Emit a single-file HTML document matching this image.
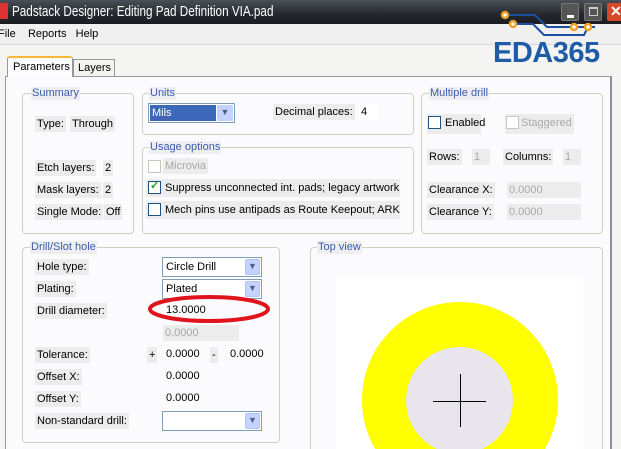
<!DOCTYPE html><html><head><style>
*{margin:0;padding:0;box-sizing:border-box}
html,body{width:621px;height:449px;overflow:hidden}
body{background:#ece9d8;font-family:"Liberation Sans",sans-serif;font-size:11px;color:#000;position:relative}
.a{position:absolute;white-space:nowrap}
.g{position:absolute;border:1px solid #d0d0bf;border-radius:4px}
.gt{position:absolute;color:#3a5cad;background:#eeeef0;font-size:11px;padding:0 1px;line-height:13px}
.l{position:absolute;background:#ececec;line-height:16px;padding:0 2px;white-space:nowrap}
.cb{position:absolute;width:13px;height:13px;border:1px solid #1c5180;background:#fff}
.dd{position:absolute;border:1px solid #7f9db9;background:#fff;height:20px;line-height:18px;padding-left:3px}
.dd b{position:absolute;right:1px;top:1px;width:15px;height:16px;background:#c3d3fd;border:1px solid #b0c4f0;border-radius:2px;font-weight:normal;text-align:center;line-height:13px;font-size:9px;color:#4d6185}
</style></head><body>
<div class="a" style="left:0;top:0;width:621px;height:24px;background:linear-gradient(#4a4f58,#25282e 60%,#1a1c20)"></div>
<div class="a" style="left:0;top:3px;width:8px;height:16px;background:#d33"></div>
<div class="a" style="left:12px;top:3px;color:#fff;font-size:15px;line-height:18px;transform:scaleX(0.78);transform-origin:0 0">Padstack Designer: Editing Pad Definition VIA.pad</div>
<div class="a" style="left:0;top:24px;width:621px;height:20px;background:#f0f0f0"></div>
<div class="a" style="left:-2px;top:28px">File&nbsp;&nbsp;&nbsp; Reports&nbsp;&nbsp; Help</div>
<div class="a" style="left:0;top:44px;width:621px;height:1px;background:#d8d8d8"></div>
<div class="a" style="left:0;top:45px;width:621px;height:404px;background:#f4f4f2"></div>
<svg class="a" style="left:500px;top:9px" width="100" height="30"><path d="M5 6 L35 6 L47 18 L95 18" stroke="#1d4fa0" stroke-width="2" fill="none"/><path d="M13 15 L33 15 L44 26 L84 26 L88 18" stroke="#1d4fa0" stroke-width="2" fill="none"/><circle cx="5" cy="6" r="3" fill="#fff" stroke="#f0a020" stroke-width="2.5"/><circle cx="13" cy="15" r="3" fill="#fff" stroke="#f0a020" stroke-width="2.5"/><circle cx="74" cy="18" r="3" fill="#fff" stroke="#f0a020" stroke-width="2.5"/><circle cx="88" cy="18" r="3" fill="#fff" stroke="#f0a020" stroke-width="2.5"/></svg>
<div class="a" style="left:561px;top:3px;width:18px;height:18px;border:1px solid #777;background:#555;border-radius:2px"><div style="position:absolute;left:5px;top:11px;width:7px;height:3px;background:#fff"></div></div>
<div class="a" style="left:584px;top:3px;width:18px;height:18px;border:1px solid #777;background:#555;border-radius:2px"><div style="position:absolute;left:4px;top:3px;width:9px;height:9px;border:1px solid #ccc;border-top-width:2px"></div></div>
<div class="a" style="left:607px;top:3px;width:14px;height:18px;background:#d5482a;border-radius:2px 0 0 2px;color:#fff;font-weight:bold;font-size:14px;line-height:17px;padding-left:3px;overflow:hidden">✕</div>
<div class="a" style="left:493px;top:36px;color:#1f5ca8;font-size:29px;font-weight:bold;letter-spacing:-0.5px;line-height:34px">EDA365</div>
<div class="a" style="left:5px;top:76px;width:607px;height:373px;background:#fbfbfd;border:1px solid #919b9c;border-right:2px solid #8c9295;border-bottom:none"></div>
<div class="a" style="left:7px;top:56px;width:66px;height:21px;background:#fcfcfe;border:1px solid #919b9c;border-bottom:none;border-top:2px solid #f5b83d;border-radius:3px 3px 0 0;padding:3px 0 0 5px">Parameters</div>
<div class="a" style="left:73px;top:59px;width:42px;height:17px;background:#f3f3ef;border:1px solid #919b9c;border-bottom:none;padding:2px 0 0 4px">Layers</div>
<div class="g" style="left:22px;top:93px;width:112px;height:141px"></div>
<div class="gt" style="left:31px;top:87px">Summary</div>
<div class="l" style="left:35px;top:116px">Type:</div><div class="l" style="left:70px;top:116px">Through</div>
<div class="l" style="left:35px;top:160px">Etch layers:</div><div class="l" style="left:103px;top:160px">2</div>
<div class="l" style="left:35px;top:182px">Mask layers:</div><div class="l" style="left:103px;top:182px">2</div>
<div class="l" style="left:35px;top:204px">Single Mode:</div><div class="l" style="left:104px;top:204px">Off</div>
<div class="g" style="left:142px;top:93px;width:272px;height:42px"></div>
<div class="gt" style="left:149px;top:87px">Units</div>
<div class="a" style="left:148px;top:103px;width:87px;height:20px;border:1px solid #7f9db9;background:#fff"><div style="position:absolute;left:1px;top:1px;width:66px;height:16px;background:#3d67b8;color:#fff;padding-left:2px;line-height:16px">Mils</div><div style="position:absolute;right:1px;top:1px;width:16px;height:16px;background:#c3d3fd;color:#4d6185;font-size:9px;text-align:center;line-height:15px">▼</div></div>
<div class="l" style="left:273px;top:104px">Decimal places:</div><div class="l" style="left:359px;top:104px;background:#fff;width:20px">4</div>
<div class="g" style="left:142px;top:147px;width:272px;height:87px"></div>
<div class="gt" style="left:149px;top:141px">Usage options</div>
<div class="cb" style="left:148px;top:160px;border-color:#c9c7ba"></div><div class="l" style="left:163px;top:158px;color:#a8a8a8">Microvia</div>
<div class="l" style="left:146px;top:179px;width:254px;height:18px"></div><div class="cb" style="left:148px;top:181px"><span style="position:absolute;left:1px;top:-3px;color:#21a121;font-weight:bold;font-size:11px">✓</span></div><div class="a" style="left:165px;top:182px">Suppress unconnected int. pads; legacy artwork</div>
<div class="l" style="left:146px;top:201px;width:254px;height:18px"></div><div class="cb" style="left:148px;top:203px"></div><div class="a" style="left:165px;top:204px">Mech pins use antipads as Route Keepout; ARK</div>
<div class="g" style="left:421px;top:93px;width:182px;height:141px"></div>
<div class="gt" style="left:429px;top:87px">Multiple drill</div>
<div class="l" style="left:427px;top:114px;width:54px;height:20px"></div><div class="cb" style="left:428px;top:116px"></div><div class="a" style="left:445px;top:117px">Enabled</div>
<div class="l" style="left:505px;top:114px;width:69px;height:20px"></div><div class="cb" style="left:506px;top:116px;border-color:#c9c7ba"></div><div class="a" style="left:521px;top:117px;color:#a8a8a8">Staggered</div>
<div class="l" style="left:427px;top:149px">Rows:</div><div class="l" style="left:472px;top:149px;color:#a8a8a8;width:18px">1</div>
<div class="l" style="left:503px;top:149px">Columns:</div><div class="l" style="left:563px;top:149px;color:#a8a8a8;width:18px">1</div>
<div class="l" style="left:427px;top:182px">Clearance X:</div><div class="l" style="left:507px;top:182px;color:#a8a8a8;width:74px">0.0000</div>
<div class="l" style="left:427px;top:204px">Clearance Y:</div><div class="l" style="left:507px;top:204px;color:#a8a8a8;width:74px">0.0000</div>
<div class="g" style="left:22px;top:247px;width:258px;height:196px"></div>
<div class="gt" style="left:30px;top:241px">Drill/Slot hole</div>
<div class="l" style="left:35px;top:259px">Hole type:</div><div class="dd" style="left:162px;top:257px;width:100px">Circle Drill<b>▼</b></div>
<div class="l" style="left:35px;top:281px">Plating:</div><div class="dd" style="left:162px;top:279px;width:100px">Plated<b>▼</b></div>
<div class="l" style="left:35px;top:303px">Drill diameter:</div><div class="a" style="left:166px;top:304px">13.0000</div>
<svg class="a" style="left:148px;top:294px" width="125" height="30"><ellipse cx="61" cy="15" rx="59" ry="12" fill="none" stroke="#e0141c" stroke-width="4"/></svg>
<div class="l" style="left:36px;top:325px;width:112px"></div><div class="l" style="left:163px;top:325px;width:76px;color:#a8a8a8">0.0000</div>
<div class="l" style="left:35px;top:347px">Tolerance:</div><div class="l" style="left:147px;top:347px">+</div><div class="a" style="left:166px;top:348px">0.0000</div><div class="l" style="left:210px;top:347px">-</div><div class="a" style="left:230px;top:348px">0.0000</div>
<div class="l" style="left:35px;top:369px">Offset X:</div><div class="a" style="left:166px;top:370px">0.0000</div>
<div class="l" style="left:35px;top:391px">Offset Y:</div><div class="a" style="left:166px;top:392px">0.0000</div>
<div class="l" style="left:35px;top:413px">Non-standard drill:</div><div class="dd" style="left:162px;top:411px;width:100px"><b>▼</b></div>
<div class="a" style="left:310px;top:247px;width:293px;height:202px;border:1px solid #d0d0bf;border-bottom:none;border-radius:4px 4px 0 0"></div>
<div class="gt" style="left:317px;top:241px">Top view</div>
<div class="a" style="left:336px;top:278px;width:247px;height:171px;background:#fff;overflow:hidden">
<div class="a" style="left:26px;top:24px;width:196px;height:196px;border-radius:50%;background:#ffff00"></div>
<div class="a" style="left:70px;top:69px;width:107px;height:107px;border-radius:50%;background:#e8e6ec"></div>
<div class="a" style="left:97px;top:123px;width:53px;height:1px;background:#000"></div>
<div class="a" style="left:124px;top:96px;width:1px;height:53px;background:#000"></div>
</div>
</body></html>
